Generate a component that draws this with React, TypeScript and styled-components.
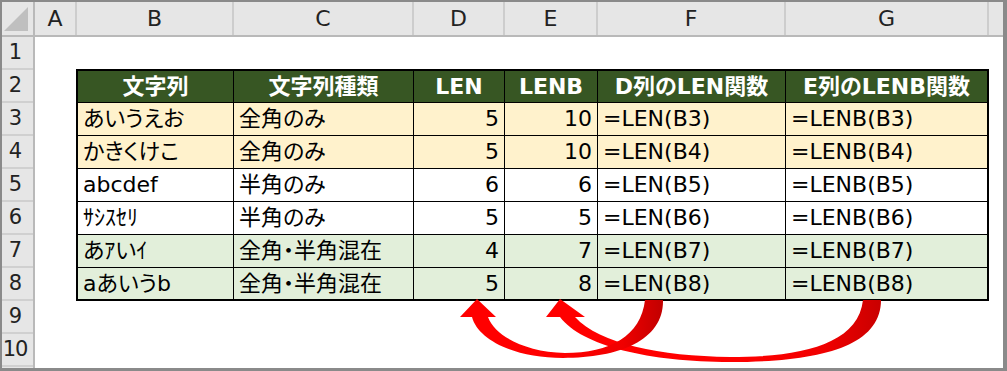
import React from "react";
import styled, { createGlobalStyle } from "styled-components";

const GlobalStyle = createGlobalStyle`
  html, body {
    margin: 0;
    padding: 0;
    background: #ffffff;
  }
  * {
    box-sizing: border-box;
  }
`;

const FONT = `"DejaVu Sans", "Noto Sans CJK JP", sans-serif`;

const Frame = styled.div`
  position: relative;
  width: 1007px;
  height: 371px;
  overflow: hidden;
  border-style: solid;
  border-color: #8a8a8a;
  border-width: 2px 4px 3px 2px;
  background: #ffffff;
  font-family: ${FONT};
  font-feature-settings: "palt";
`;

const ColumnBar = styled.div`
  display: grid;
  grid-template-columns: 33px 42px 157px 180px 91px 93px 188px 203px 14px;
  height: 35px;
  background: #e6e6e6;
  border-bottom: 2px solid #b9b9b9;
`;

const Corner = styled.div`
  display: flex;
  justify-content: flex-end;
  align-items: flex-end;
  padding: 0 5px 4px 0;
  border-right: 2px solid #b9b9b9;
`;

const CornerMark = styled.div`
  width: 0;
  height: 0;
  border-left: 24px solid transparent;
  border-bottom: 24px solid #bfbfbf;
`;

const ColHead = styled.div`
  display: flex;
  align-items: center;
  justify-content: center;
  border-right: 2px solid #cdcdcd;
  color: #222222;
  font-size: 22px;
  line-height: 1;
  &:last-child {
    border-right: none;
  }
`;

const Body = styled.div`
  display: flex;
  height: 331px;
  overflow: hidden;
`;

const RowBar = styled.div`
  display: flex;
  flex-direction: column;
  width: 33px;
  flex: none;
  background: #e6e6e6;
  border-right: 2px solid #b9b9b9;
`;

const RowHead = styled.div`
  flex: none;
  display: flex;
  align-items: center;
  justify-content: center;
  height: 33px;
  padding-right: 5px;
  border-bottom: 2px solid #d0d0d0;
  color: #222222;
  font-size: 21px;
  letter-spacing: -1px;
  line-height: 1;
  white-space: nowrap;
`;

const Canvas = styled.div`
  flex: 1;
  padding: 32px 0 0 41px;
`;

const Grid = styled.div`
  display: grid;
  grid-template-columns: 156px 180px 91px 93px 188px 201px;
  grid-template-rows: 32px repeat(5, 33px) 31px;
  width: max-content;
  border: 2px solid #000000;
`;

type Tone = "head" | "yellow" | "white" | "green";
type Align = "left" | "right" | "center";

const toneBg: Record<Tone, string> = {
  head: "#375623",
  yellow: "#fff2cc",
  white: "#ffffff",
  green: "#e2efda",
};

const justify: Record<Align, string> = {
  left: "flex-start",
  right: "flex-end",
  center: "center",
};

const Cell = styled.div<{ $tone: Tone; $align: Align }>`
  display: flex;
  align-items: center;
  justify-content: ${(p) => justify[p.$align]};
  padding: 0 5px;
  background: ${(p) => toneBg[p.$tone]};
  color: ${(p) => (p.$tone === "head" ? "#ffffff" : "#000000")};
  font-size: 22px;
  font-weight: ${(p) => (p.$tone === "head" ? 700 : 400)};
  line-height: 1;
  white-space: nowrap;
  border-right: 1px solid #000000;
  border-bottom: 1px solid #000000;
  &:nth-child(6n) {
    border-right: none;
  }
  &:nth-last-child(-n + 6) {
    border-bottom: none;
  }
`;

const Arrows = styled.svg`
  position: absolute;
  left: -2px;
  top: -2px;
  width: 1007px;
  height: 371px;
  pointer-events: none;
`;

const columns = ["A", "B", "C", "D", "E", "F", "G", ""];

const headers = ["文字列", "文字列種類", "LEN", "LENB", "D列のLEN関数", "E列のLENB関数"];

const samples: { text: string; kind: string; len: number; lenb: number; tone: Tone }[] = [
  { text: "あいうえお", kind: "全角のみ", len: 5, lenb: 10, tone: "yellow" },
  { text: "かきくけこ", kind: "全角のみ", len: 5, lenb: 10, tone: "yellow" },
  { text: "abcdef", kind: "半角のみ", len: 6, lenb: 6, tone: "white" },
  { text: "ｻｼｽｾﾘ", kind: "半角のみ", len: 5, lenb: 5, tone: "white" },
  { text: "あｱいｲ", kind: "全角・半角混在", len: 4, lenb: 7, tone: "green" },
  { text: "aあいうb", kind: "全角・半角混在", len: 5, lenb: 8, tone: "green" },
];

const rowNumbers = [1, 2, 3, 4, 5, 6, 7, 8, 9, 10, 11];

export default function App() {
  return (
    <>
      <GlobalStyle />
      <Frame>
        <ColumnBar>
          <Corner>
            <CornerMark />
          </Corner>
          {columns.map((c, i) => (
            <ColHead key={i}>{c}</ColHead>
          ))}
        </ColumnBar>
        <Body>
          <RowBar>
            {rowNumbers.map((n) => (
              <RowHead key={n}>{n <= 10 ? n : ""}</RowHead>
            ))}
          </RowBar>
          <Canvas>
            <Grid>
              {headers.map((h) => (
                <Cell key={h} $tone="head" $align="center">
                  {h}
                </Cell>
              ))}
              {samples.map((s, i) => {
                const ref = `B${i + 3}`;
                return (
                  <React.Fragment key={ref}>
                    <Cell $tone={s.tone} $align="left">{s.text}</Cell>
                    <Cell $tone={s.tone} $align="left">{s.kind}</Cell>
                    <Cell $tone={s.tone} $align="right">{s.len}</Cell>
                    <Cell $tone={s.tone} $align="right">{s.lenb}</Cell>
                    <Cell $tone={s.tone} $align="left">{`=LEN(${ref})`}</Cell>
                    <Cell $tone={s.tone} $align="left">{`=LENB(${ref})`}</Cell>
                  </React.Fragment>
                );
              })}
            </Grid>
          </Canvas>
        </Body>
        <Arrows viewBox="0 0 1007 371">
          <defs>
            <linearGradient id="shadeF" gradientUnits="userSpaceOnUse" x1="560" y1="0" x2="664" y2="0">
              <stop offset="0" stopColor="#ff0000" />
              <stop offset="0.6" stopColor="#f00000" />
              <stop offset="1" stopColor="#c00000" />
            </linearGradient>
            <linearGradient id="shadeG" gradientUnits="userSpaceOnUse" x1="740" y1="0" x2="882" y2="0">
              <stop offset="0" stopColor="#ff0000" />
              <stop offset="0.6" stopColor="#f00000" />
              <stop offset="1" stopColor="#c80000" />
            </linearGradient>
          </defs>
          {/* G8 -> E8 */}
          <path
            fill="url(#shadeG)"
            d="M 560 299 L 585 317 L 575 317 C 600 344 660 356 730 357 C 800 357 858 345 863 300 L 881 300 C 881 346 822 362 730 362 C 650 362 582 346 560 317 L 546 317 Z"
          />
          {/* F8 -> D8 */}
          <path
            fill="url(#shadeF)"
            d="M 477 299 L 496 317 L 488 317 C 495 336 525 352 565 353 C 610 353 641 336 645 300 L 663 300 C 664 340 620 358 563 358 C 515 358 478 340 472 317 L 460 317 Z"
          />
        </Arrows>
      </Frame>
    </>
  );
}
